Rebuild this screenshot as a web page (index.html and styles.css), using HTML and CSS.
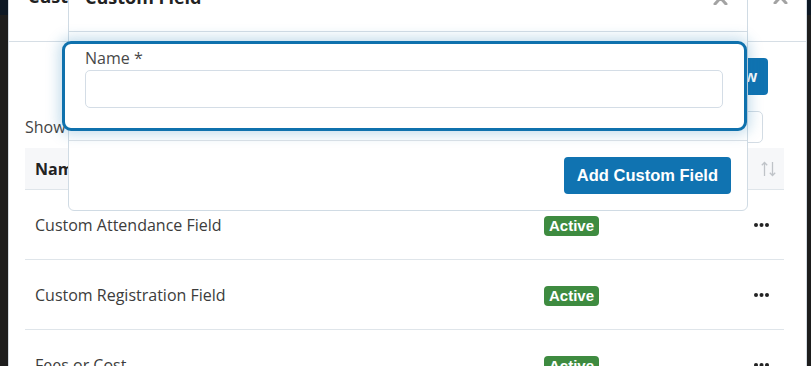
FILE: index.html
```html
<!DOCTYPE html>
<html lang="en">
<head>
    <meta charset="UTF-8">
    <meta name="viewport" content="width=device-width, initial-scale=1.0">
    <title>Custom Fields</title>
    <link rel="stylesheet" href="styles.css">
</head>
<body>

    <div class="bg-modal">
        <div class="modal-head bg-head">
            <h2 class="modal-title">Custom Fields</h2>
            <svg class="close-x" width="15" height="14" viewBox="0 0 15 14"><path d="M2 1 L13 13 M13 1 L2 13" stroke="#a3a3a3" stroke-width="3" stroke-linecap="round"/></svg>
        </div>
        <div class="bg-body">
            <div class="toolbar">
                <button class="btn">New</button>
            </div>
            <div class="filter-row">
                <span class="show-label">Show</span>
                <input type="text" class="search">
            </div>
            <div class="table">
                <div class="row head">
                    <div class="cell">Name</div>
                    <div class="cell"></div>
                    <div class="cell cell-end sort-cell">
                        <svg width="15" height="16" viewBox="0 0 15 16"><path d="M3.5 15 V1.5 M0.8 4.2 L3.5 1.5 L6.2 4.2 M11.5 1 V14.5 M8.8 11.8 L11.5 14.5 L14.2 11.8" stroke="#bfc3c8" stroke-width="1.3" fill="none"/></svg>
                    </div>
                </div>
                <div class="row">
                    <div class="cell">Custom Attendance Field</div>
                    <div class="cell"><span class="badge">Active</span></div>
                    <div class="cell cell-end"><svg class="dots" width="15" height="4" viewBox="0 0 15 4"><circle cx="2" cy="2" r="2"/><circle cx="7.5" cy="2" r="2"/><circle cx="13" cy="2" r="2"/></svg></div>
                </div>
                <div class="row">
                    <div class="cell">Custom Registration Field</div>
                    <div class="cell"><span class="badge">Active</span></div>
                    <div class="cell cell-end"><svg class="dots" width="15" height="4" viewBox="0 0 15 4"><circle cx="2" cy="2" r="2"/><circle cx="7.5" cy="2" r="2"/><circle cx="13" cy="2" r="2"/></svg></div>
                </div>
                <div class="row">
                    <div class="cell">Fees or Cost</div>
                    <div class="cell"><span class="badge">Active</span></div>
                    <div class="cell cell-end"><svg class="dots" width="15" height="4" viewBox="0 0 15 4"><circle cx="2" cy="2" r="2"/><circle cx="7.5" cy="2" r="2"/><circle cx="13" cy="2" r="2"/></svg></div>
                </div>
            </div>
        </div>
    </div>

    <div class="fg-modal">
        <div class="modal-head fg-head">
            <h2 class="modal-title">Custom Field</h2>
            <svg class="close-x" width="15" height="14" viewBox="0 0 15 14"><path d="M2 1 L13 13 M13 1 L2 13" stroke="#a3a3a3" stroke-width="3" stroke-linecap="round"/></svg>
        </div>
        <div class="fg-body">
            <div class="spot">
                <label class="field-label" for="fieldName">Name *</label>
                <input type="text" id="fieldName" class="field-input">
            </div>
        </div>
        <div class="fg-foot">
            <button class="btn btn-add">Add Custom Field</button>
        </div>
    </div>

</body>
</html>
```

FILE: styles.css
```css
body {
    margin: 0;
    height: 366px;
    overflow: hidden;
    position: relative;
    font-family: "Open Sans", Arial, sans-serif;
    background: linear-gradient(#0d1824 0, #0d1824 15px, #1d1d1d 15px);
}

.bg-modal {
    margin: -40px 0 0 8px;
    width: 799px;
    height: 406px;
    box-sizing: border-box;
    background-color: #fff;
    border-left: 1px solid #d3dbe2;
    border-right: 1px solid #d3dbe2;
}

.modal-head {
    display: flex;
    justify-content: space-between;
    align-items: flex-start;
    border-bottom: 1px solid #d6dee5;
}

.bg-head {
    padding: 24px 18px 33px 19px;
}

.fg-head {
    padding: 24px 19px 22px 16px;
}

.modal-title {
    margin: 0;
    font-size: 18px;
    line-height: 24px;
    font-weight: 700;
    color: #222;
}

.close-x {
    margin-top: 6px;
}

.bg-body {
    padding: 16px 22px 0 16px;
}

.toolbar {
    display: flex;
    justify-content: flex-end;
    padding-right: 16px;
}

.btn {
    height: 37px;
    padding: 0 11px;
    border: none;
    border-radius: 4px;
    background-color: #1073b1;
    color: #fff;
    font-family: "Liberation Sans", Arial, sans-serif;
    font-size: 16.5px;
    font-weight: 700;
}

.filter-row {
    display: flex;
    justify-content: space-between;
    align-items: center;
    margin-top: 16px;
    padding-right: 21px;
}

.show-label {
    font-size: 16px;
    color: #444;
}

.search {
    width: 120px;
    height: 32px;
    box-sizing: border-box;
    border: 1px solid #d3dce4;
    border-radius: 5px;
}

.table {
    margin-top: 5px;
}

.row {
    display: grid;
    grid-template-columns: 509px 1fr 60px;
    align-items: center;
    height: 70px;
    box-sizing: border-box;
    border-bottom: 1px solid #dfe5ea;
    font-size: 16px;
    color: #3c3c3c;
}

.row.head {
    height: 42px;
    background-color: #f6f7f9;
    font-weight: 700;
    color: #222;
}

.cell {
    padding: 0 10px;
    white-space: nowrap;
}

.cell-end {
    display: flex;
    justify-content: flex-end;
    padding-right: 15px;
}

.sort-cell {
    padding-right: 8px;
}

.badge {
    display: inline-block;
    height: 20px;
    line-height: 20px;
    padding: 0 5px;
    border-radius: 4px;
    background-color: #3e8b40;
    color: #fff;
    font-family: "Liberation Sans", Arial, sans-serif;
    font-size: 15px;
    font-weight: 700;
}

.dots {
    fill: #222;
}

.fg-modal {
    position: absolute;
    left: 68px;
    top: -40px;
    width: 680px;
    box-sizing: border-box;
    background-color: #fff;
    border: 1px solid #d0dbe4;
    border-radius: 0 0 6px 6px;
}

.fg-body {
    padding: 9px 0;
}

.spot {
    margin-left: -7px;
    padding: 2px 21px 20px 20px;
    border: 3px solid #0f71ad;
    border-radius: 9px;
    background-color: #fff;
    box-shadow: 0 0 14px 3px rgba(16, 115, 177, 0.25);
}

.field-label {
    display: block;
    font-size: 16px;
    line-height: 24px;
    color: #484848;
}

.field-input {
    display: block;
    width: 100%;
    height: 38px;
    box-sizing: border-box;
    border: 1px solid #d4dde6;
    border-radius: 5px;
}

.fg-foot {
    display: flex;
    justify-content: flex-end;
    padding: 16px;
    border-top: 1px solid #d6dee5;
}

.btn-add {
    padding: 0 13px;
}
```
